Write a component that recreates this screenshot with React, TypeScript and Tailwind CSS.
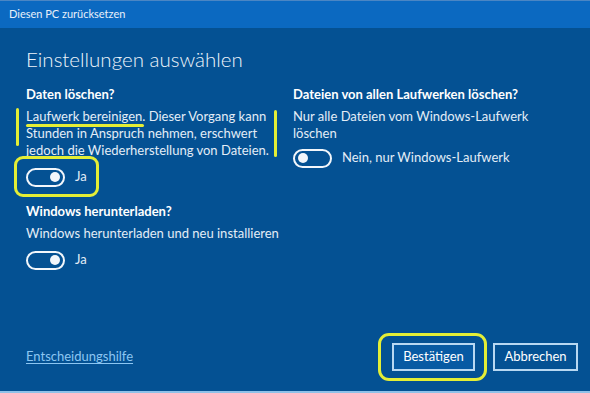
import React from "react";

function Toggle({ on }: { on: boolean }) {
  return (
    <div className={`flex h-[19px] w-[39px] items-center rounded-full border-2 border-[#f2f6fb] px-[3px] ${on ? "justify-end" : "justify-start"}`}>
      <div className="h-[10px] w-[10px] rounded-full bg-[#f2f6fb]" />
    </div>
  );
}

export default function App() {
  return (
    <div className="relative flex h-[393px] w-[590px] flex-col overflow-hidden bg-[#045193] font-['Lato','Liberation_Sans',sans-serif] text-[#e3edf7]">
      <div className="flex h-[28px] items-center border-t border-[#4b86c4] bg-[#0b69c1] pl-[9px] text-[11px] text-[#e8f0fa]">
        Diesen PC zurücksetzen
      </div>
      <div className="flex flex-1 flex-col border-b-2 border-[#8fc1e8] pl-[26px]">
        <h1 className="mt-[19px] text-[20.5px] font-light leading-[24px] text-[#eef4fb]">Einstellungen auswählen</h1>
        <div className="mt-[15px] flex">
          <div className="flex w-[267px] flex-col">
            <div className="text-[13px] font-bold leading-[17px] text-white">Daten löschen?</div>
            <p className="mt-[5px] text-[13px] leading-[17px]">
              Laufwerk bereinigen. Dieser Vorgang kann Stunden in Anspruch nehmen, erschwert jedoch die Wiederherstellung von Dateien.
            </p>
            <div className="mt-[8px] flex h-[20px] items-center gap-[10px] text-[13px]">
              <Toggle on />
              <span>Ja</span>
            </div>
            <div className="mt-[16px] text-[13px] font-bold leading-[17px] text-white">Windows herunterladen?</div>
            <p className="mt-[5px] text-[13px] leading-[17px]">Windows herunterladen und neu installieren</p>
            <div className="mt-[8px] flex h-[20px] items-center gap-[10px] text-[13px]">
              <Toggle on />
              <span>Ja</span>
            </div>
          </div>
          <div className="flex w-[260px] flex-col">
            <div className="text-[13px] font-bold leading-[17px] text-white">Dateien von allen Laufwerken löschen?</div>
            <p className="mt-[5px] w-[240px] text-[13px] leading-[17px]">Nur alle Dateien vom Windows-Laufwerk löschen</p>
            <div className="mt-[6px] flex h-[20px] items-center gap-[10px] text-[13px]">
              <Toggle on={false} />
              <span>Nein, nur Windows-Laufwerk</span>
            </div>
          </div>
        </div>
        <div className="mt-auto mb-[20px] flex h-[28px] items-center pr-[12px]">
          <span className="text-[13px] text-[#8cc6f2] underline underline-offset-2">Entscheidungshilfe</span>
          <div className="ml-auto flex gap-[18px]">
            <button className="h-[28px] w-[83px] border-2 border-[#b8d8f2] bg-[#075aa3] text-[13px] text-white">Bestätigen</button>
            <button className="h-[28px] w-[85px] border-2 border-[#b8d8f2] bg-[#045193] text-[13px] text-white">Abbrechen</button>
          </div>
        </div>
      </div>

      {/* yellow annotations drawn over the screenshot */}
      <div className="absolute left-[16px] top-[108px] h-[38px] w-[3px] rounded bg-[#e4ee36]" />
      <div className="absolute left-[274px] top-[110px] h-[47px] w-[3px] rounded bg-[#e4ee36]" />
      <div className="absolute left-[26px] top-[124px] h-[3px] w-[118px] rounded bg-[#e4ee36]" />
      <div className="absolute left-[14px] top-[156px] h-[41px] w-[85px] rounded-[9px] border-[3px] border-[#e4ee36]" />
      <div className="absolute left-[378px] top-[333px] h-[48px] w-[109px] rounded-[11px] border-[3px] border-[#e4ee36]" />
    </div>
  );
}
